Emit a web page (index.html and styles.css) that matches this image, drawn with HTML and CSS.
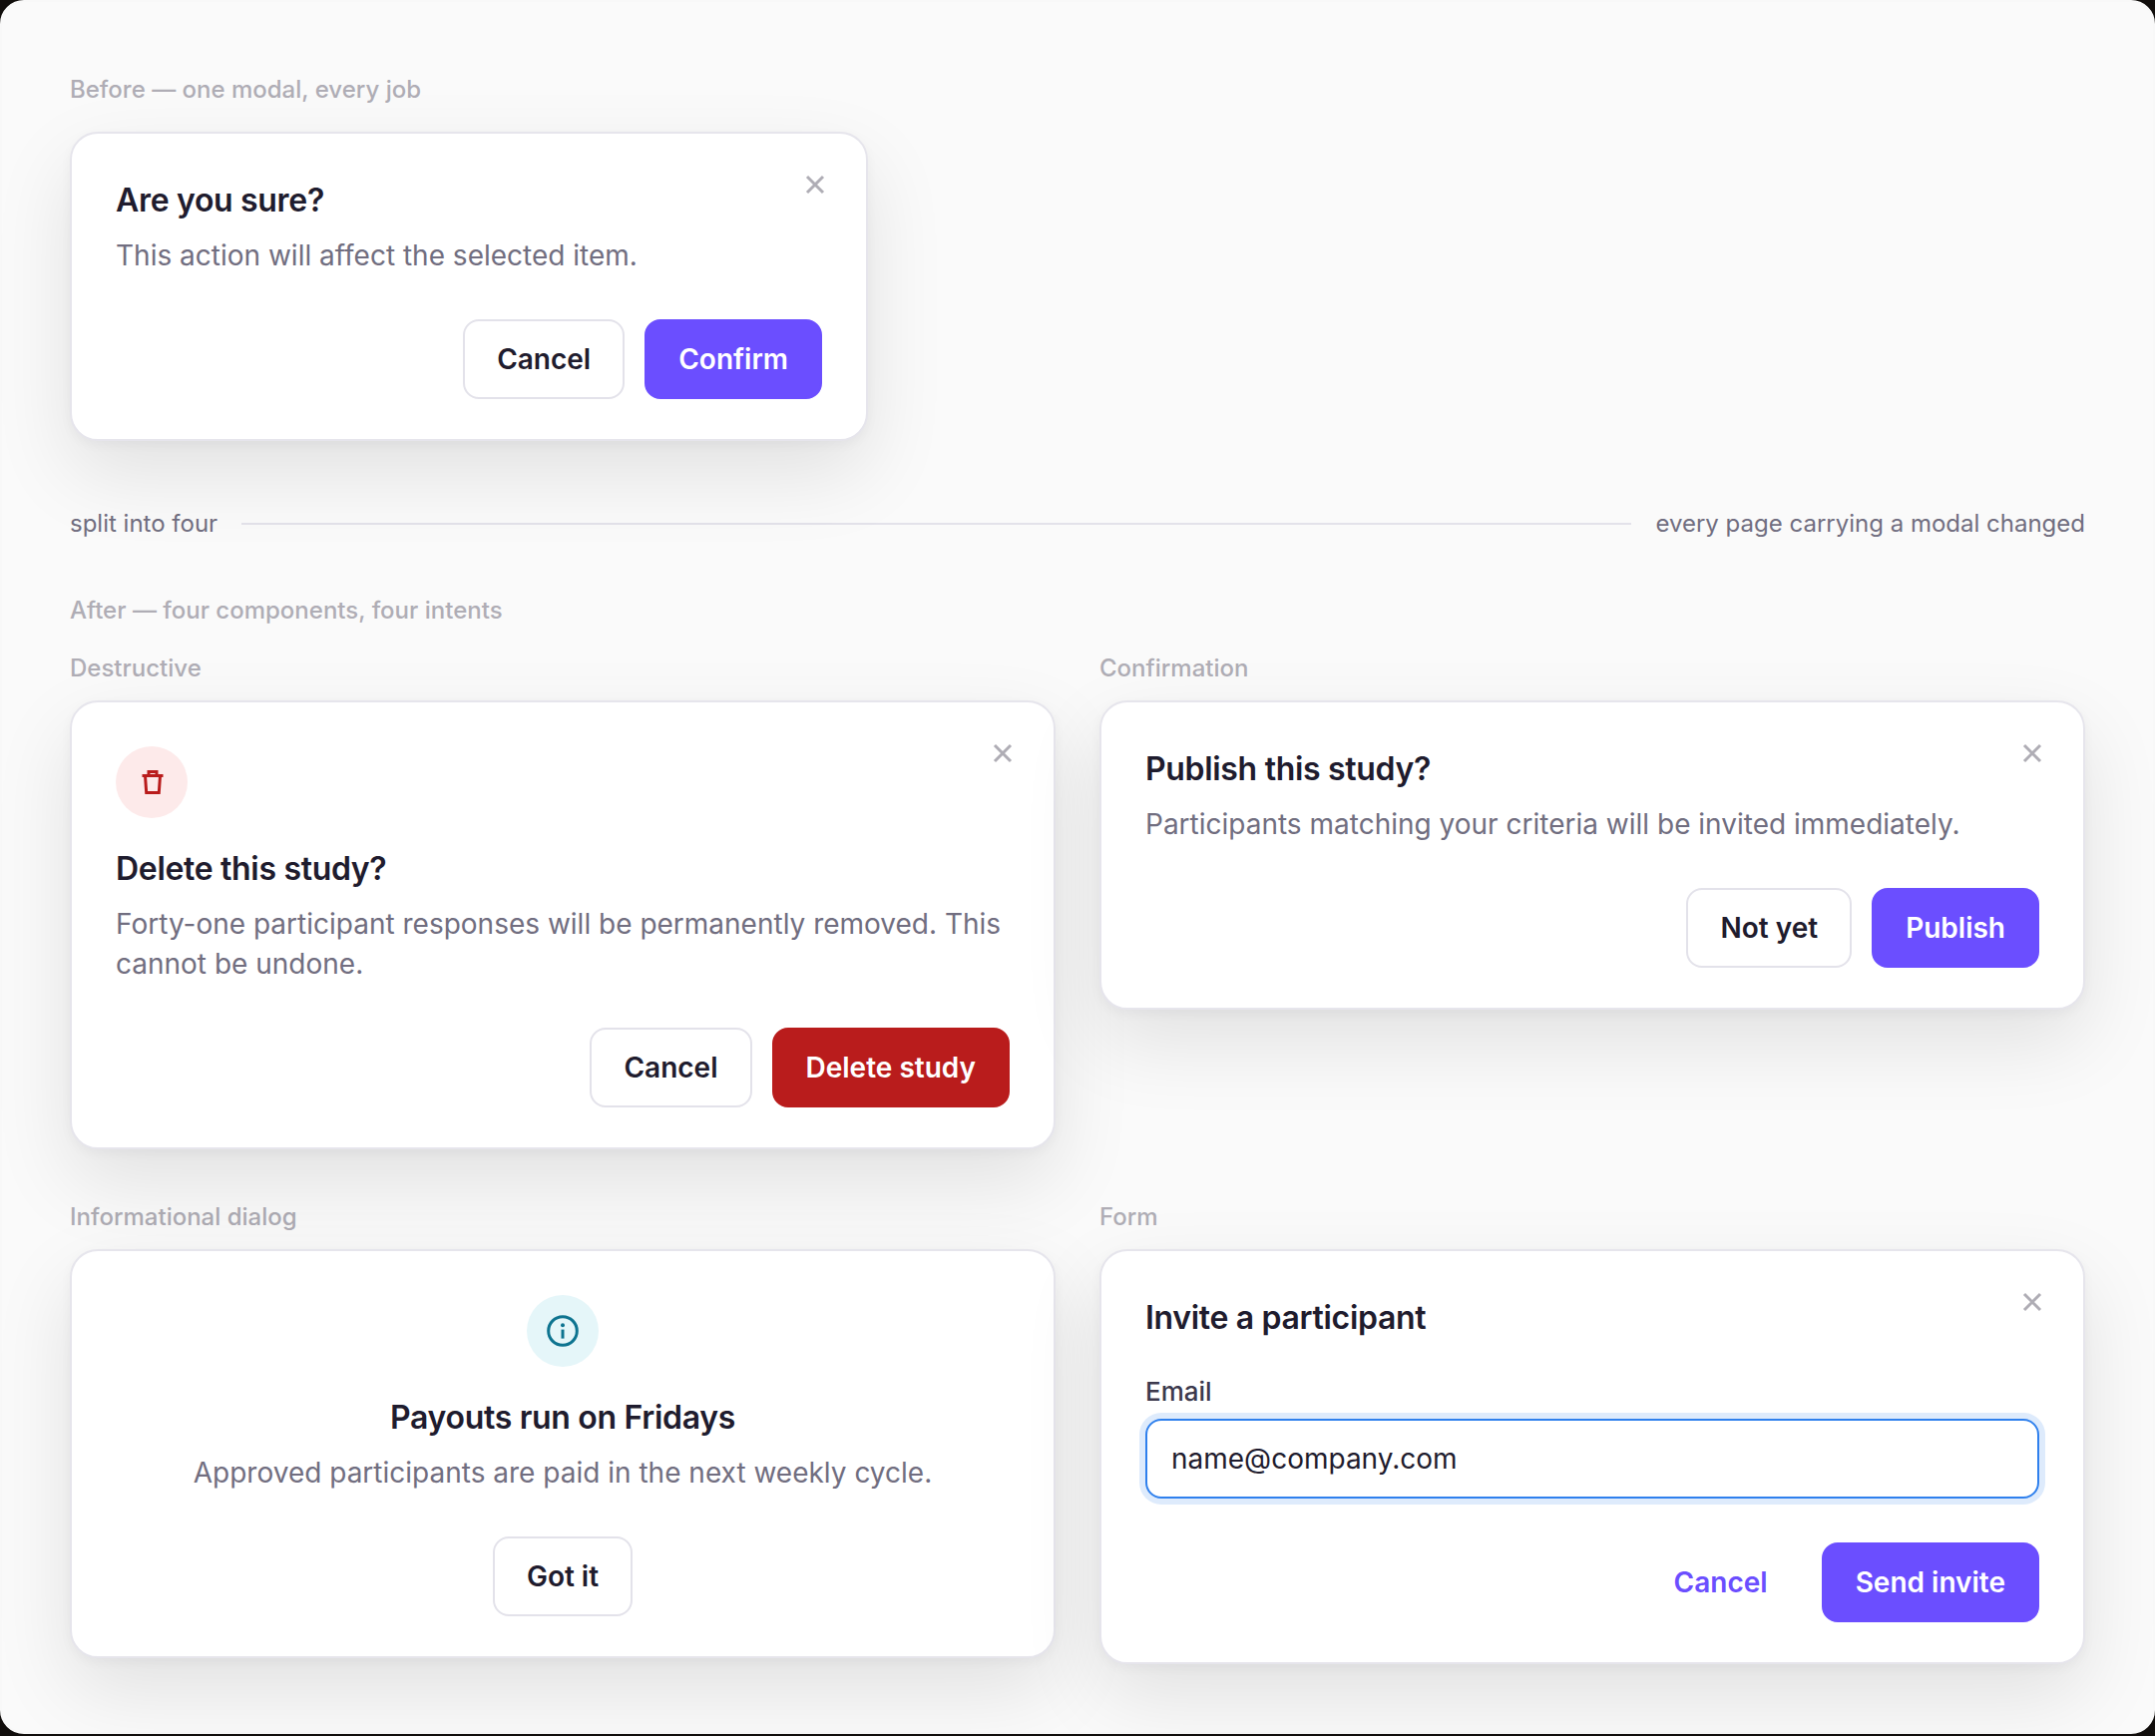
FILE: index.html
```html
<!DOCTYPE html>
<html lang="en">
<head>
    <meta charset="UTF-8">
    <meta name="viewport" content="width=device-width, initial-scale=1.0">
    <title>Modal split</title>
    <link rel="stylesheet" href="styles.css">
</head>
<body>
    <main class="board">
        <section class="before">
            <h2 class="label">Before — one modal, every job</h2>
            <div class="modal">
                <button class="close" type="button" aria-label="Close">
                    <svg viewBox="0 0 34 34"><path d="M9 9l16 16M25 9L9 25"/></svg>
                </button>
                <h3 class="title">Are you sure?</h3>
                <p class="text">This action will affect the selected item.</p>
                <div class="actions">
                    <button class="btn" type="button">Cancel</button>
                    <button class="btn primary" type="button">Confirm</button>
                </div>
            </div>
        </section>

        <div class="divider">
            <span>split into four</span>
            <div class="line"></div>
            <span>every page carrying a modal changed</span>
        </div>

        <section class="after">
            <h2 class="label">After — four components, four intents</h2>
            <div class="grid">
                <div class="cell">
                    <h3 class="label">Destructive</h3>
                    <div class="modal">
                        <button class="close" type="button" aria-label="Close">
                            <svg viewBox="0 0 34 34"><path d="M9 9l16 16M25 9L9 25"/></svg>
                        </button>
                        <div class="icon danger-icon">
                            <svg viewBox="0 0 30 30"><path d="M5.5 8.5h21M12 8.5v-4h8v4M8.5 8.5l1.2 17h12.6l1.2-17"/></svg>
                        </div>
                        <h4 class="title">Delete this study?</h4>
                        <p class="text">Forty-one participant responses will be permanently removed. This cannot be undone.</p>
                        <div class="actions">
                            <button class="btn" type="button">Cancel</button>
                            <button class="btn danger" type="button">Delete study</button>
                        </div>
                    </div>
                </div>

                <div class="cell">
                    <h3 class="label">Confirmation</h3>
                    <div class="modal">
                        <button class="close" type="button" aria-label="Close">
                            <svg viewBox="0 0 34 34"><path d="M9 9l16 16M25 9L9 25"/></svg>
                        </button>
                        <h4 class="title">Publish this study?</h4>
                        <p class="text">Participants matching your criteria will be invited immediately.</p>
                        <div class="actions">
                            <button class="btn" type="button">Not yet</button>
                            <button class="btn primary" type="button">Publish</button>
                        </div>
                    </div>
                </div>

                <div class="cell">
                    <h3 class="label">Informational dialog</h3>
                    <div class="modal centered">
                        <div class="icon info-icon">
                            <svg viewBox="0 0 34 34">
                                <circle cx="17" cy="17" r="14.3"/>
                                <path d="M17 15.6v9"/>
                                <circle class="dot" cx="17" cy="11.2" r="2"/>
                            </svg>
                        </div>
                        <h4 class="title">Payouts run on Fridays</h4>
                        <p class="text">Approved participants are paid in the next weekly cycle.</p>
                        <div class="actions">
                            <button class="btn" type="button">Got it</button>
                        </div>
                    </div>
                </div>

                <div class="cell">
                    <h3 class="label">Form</h3>
                    <form class="modal">
                        <button class="close" type="button" aria-label="Close">
                            <svg viewBox="0 0 34 34"><path d="M9 9l16 16M25 9L9 25"/></svg>
                        </button>
                        <h4 class="title">Invite a participant</h4>
                        <label class="field-label" for="email">Email</label>
                        <input class="field" id="email" type="email" value="name@company.com">
                        <div class="actions">
                            <button class="btn ghost" type="button">Cancel</button>
                            <button class="btn primary" type="submit">Send invite</button>
                        </div>
                    </form>
                </div>
            </div>
        </section>
    </main>
</body>
</html>
```
FILE: styles.css
```css
* {
    box-sizing: border-box;
}
body {
    margin: 0;
    background: #110e0c;
    font-family: Inter, "Liberation Sans", sans-serif;
    color: #1f1c2e;
}
h2, h3, h4, p {
    margin: 0;
}
.board {
    padding: 72px 68px 68px;
    border: 2px solid #f8f8f8;
    border-radius: 24px;
    background: #fafafa;
}
.label {
    font-size: 24px;
    line-height: 32px;
    font-weight: 500;
    color: #afadb5;
}
.before {
    display: flex;
    flex-direction: column;
    gap: 26px;
    max-width: 800px;
}
.divider {
    display: flex;
    align-items: center;
    gap: 24px;
    margin: 67px 0 55px;
    font-size: 24px;
    line-height: 32px;
    color: #716e80;
}
.line {
    flex: 1;
    height: 2px;
    background: #e3e2ea;
}
.after {
    display: flex;
    flex-direction: column;
    gap: 26px;
}
.grid {
    display: grid;
    grid-template-columns: 1fr 1fr;
    gap: 52px 44px;
    align-items: start;
}
.cell {
    display: flex;
    flex-direction: column;
    gap: 16px;
}

/* Modal */
.modal {
    position: relative;
    padding: 44px 44px 40px;
    border: 2px solid #e6e5ec;
    border-radius: 28px;
    background: #fff;
    box-shadow: 0 32px 80px rgba(0, 0, 0, 0.1), 0 4px 12px rgba(28, 25, 46, 0.04);
}
.close {
    position: absolute;
    top: 34px;
    right: 34px;
    width: 34px;
    height: 34px;
    padding: 0;
    border: 0;
    background: none;
    cursor: pointer;
}
.close svg {
    display: block;
    fill: none;
    stroke: #afadb5;
    stroke-width: 3;
}
.title {
    font-size: 32px;
    line-height: 46px;
    font-weight: 600;
    letter-spacing: -0.01em;
}
.text {
    margin-top: 12px;
    font-size: 28px;
    line-height: 40px;
    color: #716e80;
}
.icon {
    display: flex;
    align-items: center;
    justify-content: center;
    width: 72px;
    height: 72px;
    margin-bottom: 28px;
    border-radius: 50%;
}
.icon svg {
    fill: none;
    stroke: currentColor;
    stroke-width: 3;
}
.danger-icon {
    background: #fdeaea;
    color: #b91c1c;
}
.danger-icon svg {
    width: 30px;
    height: 30px;
}
.info-icon {
    background: #e5f6f9;
    color: #0e7490;
}
.info-icon svg {
    width: 34px;
    height: 34px;
}
.info-icon .dot {
    fill: currentColor;
    stroke: none;
}
.centered {
    text-align: center;
}
.centered .icon {
    margin-left: auto;
    margin-right: auto;
}

/* Buttons */
.actions {
    display: flex;
    justify-content: flex-end;
    gap: 20px;
    margin-top: 44px;
}
.centered .actions {
    justify-content: center;
}
.btn {
    height: 80px;
    padding: 0 32px;
    border: 2px solid #e3e2ea;
    border-radius: 16px;
    background: #fff;
    color: #1f1c2e;
    font-family: inherit;
    font-size: 28px;
    font-weight: 600;
    cursor: pointer;
}
.btn.primary {
    border-color: #6b4eff;
    background: #6b4eff;
    color: #fff;
}
.btn.danger {
    border-color: #b91c1c;
    background: #b91c1c;
    color: #fff;
}
.btn.ghost {
    border-color: transparent;
    background: transparent;
    color: #6b4eff;
}

/* Form */
.field-label {
    display: block;
    margin: 34px 0 10px;
    font-size: 26px;
    line-height: 34px;
    font-weight: 500;
    color: #3c394d;
}
.field {
    display: block;
    width: 100%;
    height: 80px;
    padding: 0 24px;
    border: 2px solid #2f80ed;
    border-radius: 16px;
    background: #fff;
    box-shadow: 0 0 0 6px #deebfc;
    color: #1f1c2e;
    font-family: inherit;
    font-size: 28px;
    outline: none;
}
```
